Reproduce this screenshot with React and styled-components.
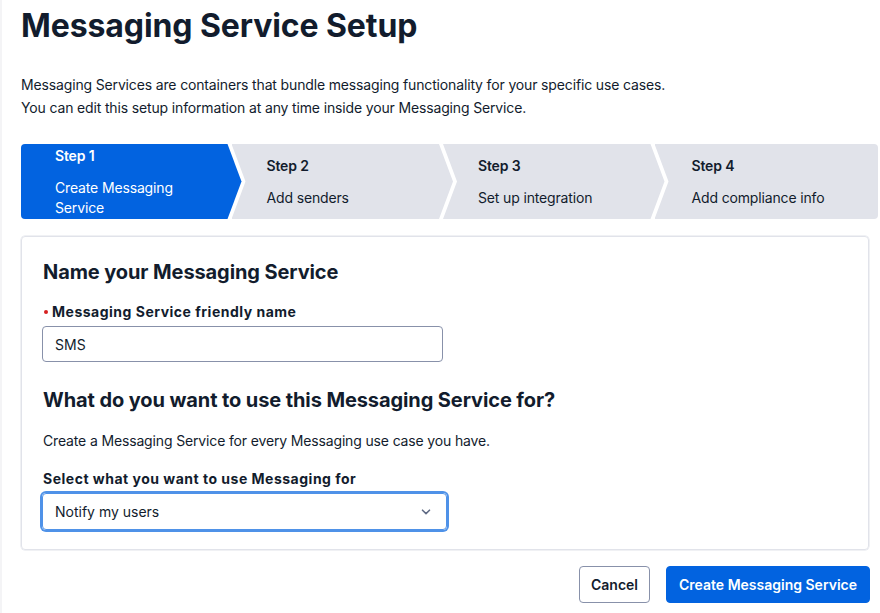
import React from "react";
import styled, { createGlobalStyle } from "styled-components";

const Global = createGlobalStyle`
  html, body { margin: 0; padding: 0; background: #ffffff; }
  body { font-family: Inter, "Noto Sans", sans-serif; color: #121C2D; -webkit-font-smoothing: antialiased; }
  * { box-sizing: border-box; }
`;

const Page = styled.div`
  min-height: 613px;
  border-left: 2px solid #F4F4F6;
  padding: 6px 2px 10px 19px;
  display: flex;
  flex-direction: column;
`;

const Title = styled.h1`
  margin: 0;
  font-size: 32px;
  line-height: 40px;
  font-weight: 700;
  letter-spacing: -0.1px;
`;

const Intro = styled.div`
  margin-top: 27px;
  font-size: 14px;
  line-height: 23px;
  letter-spacing: -0.15px;
`;

const IntroLine = styled.p`
  margin: 0;
`;

const Stepper = styled.div`
  margin-top: 25px;
  display: flex;
  height: 75px;
`;

const Step = styled.div`
  flex: 1 1 0;
  min-width: 0;
  margin-left: ${(p) => (p.$first ? "0" : "-10px")};
  background: ${(p) => (p.$active ? "#0263E0" : "#E1E3EA")};
  color: ${(p) => (p.$active ? "#FFFFFF" : "#121C2D")};
  border-radius: ${(p) => (p.$first ? "4px 0 0 4px" : p.$last ? "0 4px 4px 0" : "0")};
  clip-path: ${(p) =>
    p.$first
      ? "polygon(0 0, calc(100% - 14px) 0, 100% 50%, calc(100% - 14px) 100%, 0 100%)"
      : p.$last
      ? "polygon(0 0, 100% 0, 100% 100%, 0 100%, 14px 50%)"
      : "polygon(0 0, calc(100% - 14px) 0, 100% 50%, calc(100% - 14px) 100%, 0 100%, 14px 50%)"};
  padding: 0 24px 0 ${(p) => (p.$first ? "34px" : p.$last ? "37px" : "35px")};
  display: flex;
  flex-direction: column;
  justify-content: center;
  gap: 12px;
  font-size: 14px;
  line-height: 20px;
  letter-spacing: -0.15px;
`;

const StepNum = styled.div`
  font-weight: 600;
`;

const StepLabel = styled.div`
  font-weight: 400;
`;

const Card = styled.div`
  margin-top: 17px;
  margin-right: 9px;
  border: 1px solid #E1E3EA;
  box-shadow: 0 0 0 0.5px #E1E3EA;
  border-radius: 4px;
  padding: 21px 20px 19px 20px;
  display: flex;
  flex-direction: column;
`;

const SectionHeading = styled.h2`
  margin: 0 0 0 1px;
  margin-top: ${(p) => p.$mt || "0px"};
  font-size: 20px;
  line-height: 28px;
  font-weight: 700;
  letter-spacing: -0.1px;
`;

const Label = styled.label`
  margin-top: ${(p) => p.$mt || "0px"};
  margin-left: 1px;
  display: flex;
  align-items: center;
  gap: 4px;
  font-size: 14px;
  line-height: 20px;
  font-weight: 700;
  letter-spacing: 0.5px;
`;

const Required = styled.span`
  width: 4px;
  height: 4px;
  border-radius: 50%;
  background: #D61F1F;
  margin-left: 1px;
`;

const Input = styled.div`
  margin-top: 4px;
  width: 401px;
  height: 36px;
  border: 1px solid #8891AA;
  border-radius: 4px;
  padding: 0 12px;
  display: flex;
  align-items: center;
  font-size: 14px;
`;

const Help = styled.p`
  margin: 17px 0 0 1px;
  font-size: 14px;
  line-height: 20px;
  letter-spacing: -0.15px;
`;

const Select = styled.div`
  margin-top: 4px;
  width: 405px;
  height: 37px;
  border: 1px solid #4F92E8;
  box-shadow: 0 0 0 2px #4F92E8;
  border-radius: 4px;
  padding: 0 15px 0 12px;
  display: flex;
  align-items: center;
  justify-content: space-between;
  font-size: 14px;
`;

const Actions = styled.div`
  margin-top: 16px;
  margin-right: 8px;
  display: flex;
  justify-content: flex-end;
  gap: 16px;
`;

const Button = styled.button`
  height: 37px;
  padding: 0 ${(p) => (p.$primary ? "12px" : "11px")};
  border-radius: 4px;
  font-family: Inter, "Noto Sans", sans-serif;
  font-size: 14px;
  font-weight: 600;
  border: 1px solid ${(p) => (p.$primary ? "#0263E0" : "#8891AA")};
  background: ${(p) => (p.$primary ? "#0263E0" : "#FFFFFF")};
  color: ${(p) => (p.$primary ? "#FFFFFF" : "#121C2D")};
  cursor: pointer;
`;

const Chevron = () => (
  <svg width="10" height="6" viewBox="0 0 10 6" fill="none">
    <path d="M1.5 1.2 L5 4.6 L8.5 1.2" stroke="#606B85" strokeWidth="1.6" strokeLinecap="round" strokeLinejoin="round" />
  </svg>
);

const steps = [
  { n: "Step 1", l: "Create Messaging Service" },
  { n: "Step 2", l: "Add senders" },
  { n: "Step 3", l: "Set up integration" },
  { n: "Step 4", l: "Add compliance info" },
];

export default function App() {
  return (
    <>
      <Global />
      <Page>
        <Title>Messaging Service Setup</Title>
        <Intro>
          <IntroLine>Messaging Services are containers that bundle messaging functionality for your specific use cases.</IntroLine>
          <IntroLine>You can edit this setup information at any time inside your Messaging Service.</IntroLine>
        </Intro>
        <Stepper>
          {steps.map((s, i) => (
            <Step key={s.n} $first={i === 0} $last={i === steps.length - 1} $active={i === 0}>
              <StepNum>{s.n}</StepNum>
              <StepLabel>{s.l}</StepLabel>
            </Step>
          ))}
        </Stepper>
        <Card>
          <SectionHeading>Name your Messaging Service</SectionHeading>
          <Label $mt="16px">
            <Required />
            Messaging Service friendly name
          </Label>
          <Input>SMS</Input>
          <SectionHeading $mt="24px">What do you want to use this Messaging Service for?</SectionHeading>
          <Help>Create a Messaging Service for every Messaging use case you have.</Help>
          <Label $mt="18px">Select what you want to use Messaging for</Label>
          <Select>
            <span>Notify my users</span>
            <Chevron />
          </Select>
        </Card>
        <Actions>
          <Button>Cancel</Button>
          <Button $primary>Create Messaging Service</Button>
        </Actions>
      </Page>
    </>
  );
}
